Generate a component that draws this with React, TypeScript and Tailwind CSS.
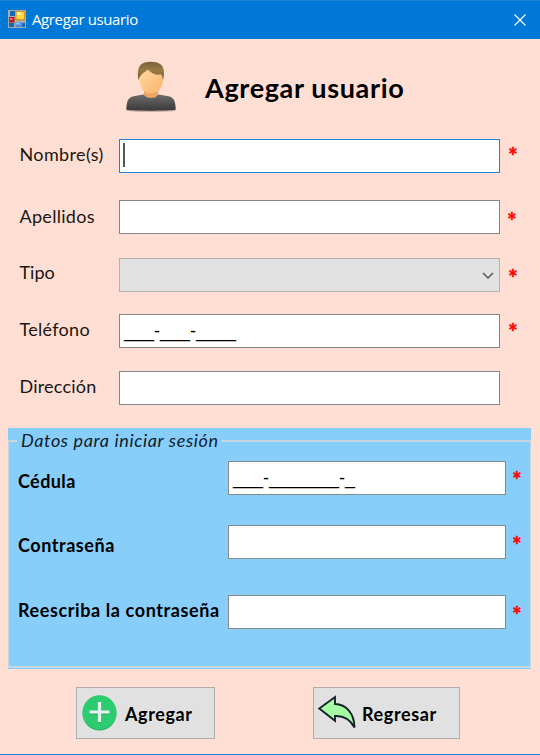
import React from 'react';

const LABEL = 'font-["Lato","Liberation_Sans",sans-serif] whitespace-pre leading-6';

function Star({ className }: { className: string }) {
  return (
    <span className={`block h-6 w-2.5 shrink-0 text-center font-["Lato",sans-serif] text-[22px] font-black leading-6 text-[#ff0000] [-webkit-text-stroke:0.4px_#ff0000] ${className}`}>*</span>
  );
}

function Field({ label, labelClass, boxClass, star, children }: {
  label: string;
  labelClass: string;
  boxClass: string;
  star?: string;
  children?: React.ReactNode;
}) {
  return (
    <div className="flex h-[34px] items-start pl-[19.500px]">
      <div className={`w-[99.500px] shrink-0 text-[18px] text-[#1c1512] ${LABEL} ${labelClass}`}>{label}</div>
      <div className={`flex h-[34px] w-[381px] shrink-0 border ${boxClass}`}>{children}</div>
      {star && <Star className={star} />}
    </div>
  );
}

function LoginField({ label, labelClass, star, children }: {
  label: string;
  labelClass: string;
  star: string;
  children?: React.ReactNode;
}) {
  return (
    <div className="flex h-[34px] items-start pl-2">
      <div className={`w-[210px] shrink-0 text-[18px] font-bold text-black ${LABEL} ${labelClass}`}>{label}</div>
      <div className="flex h-[34px] w-[278px] shrink-0 border border-[#84898e] bg-white">{children}</div>
      <Star className={star} />
    </div>
  );
}

/* Input mask: blanks join into one line per group of digits. */
function Mask({ text, className }: { text: string; className: string }) {
  return (
    <span className={`ml-[4px] whitespace-pre font-["Liberation_Sans",sans-serif] text-[18px] leading-6 text-black ${className}`}>{text}</span>
  );
}

function FormIcon() {
  return (
    <svg width="18" height="18" viewBox="0 0 18 18">
      <rect width="18" height="18" fill="#a5acae" />
      <path d="M2 1h5v5H2zM1 13h5v4H1zM14 13h3v4h-3z" fill="#1767b4" />
      <rect x="7.5" y="1" width="9.5" height="9.5" fill="#cf9626" />
      <rect x="8.5" y="2" width="7.5" height="7" fill="#ffd83c" />
      <rect x="9" y="2" width="4" height="3" fill="#fff09a" />
      <rect x="1" y="7" width="5.5" height="5.5" fill="#b51d21" />
      <rect x="2" y="8" width="2.5" height="2" fill="#ee766a" />
      <rect x="7.5" y="12" width="6" height="5" fill="#4a88dd" />
      <rect x="8" y="12.5" width="4" height="2" fill="#9bc4fc" />
    </svg>
  );
}

function UserIcon() {
  return (
    <svg width="54" height="54" viewBox="0 0 54 54">
      <defs>
        <linearGradient id="shirt" x1="0" y1="0" x2="0" y2="1">
          <stop offset="0" stopColor="#6c6c6c" /><stop offset="1" stopColor="#393939" />
        </linearGradient>
        <linearGradient id="skin" x1="0" y1="0" x2="1" y2="1">
          <stop offset="0" stopColor="#ffdda8" /><stop offset="1" stopColor="#fbb169" />
        </linearGradient>
        <linearGradient id="hair" x1="0" y1="0" x2="0" y2="1">
          <stop offset="0" stopColor="#785f37" /><stop offset=".45" stopColor="#9b7b45" /><stop offset="1" stopColor="#72552b" />
        </linearGradient>
      </defs>
      <ellipse cx="27" cy="49.500" rx="25" ry="1.500" fill="#a08b82" opacity=".55" />
      <path d="M2.300 48.800C2.500 40 4 36.500 9.500 35.200l9.500-1.700h16l9.500 1.700c5.500 1.300 7 4.800 7.200 13.600C44 50 10 50 2.300 48.800Z" fill="url(#shirt)" />
      <path d="M20 27h14v6.500c-1 4.500-13 4.500-14 0Z" fill="#eca563" />
      <path d="M15.500 16C15.500 7 20 4 27 4s12 3 12 12c0 11-5 16.500-12 16.500S15.500 27 15.500 16Z" fill="url(#skin)" />
      <path d="M14.600 19.500C12.600 10 14.500 4 20 1.800c5-1.800 12-1.500 16 1.200 4.500 3 4.800 9 3 16.500-.4-3-.9-5-2-6.200-5.500 1.200-9.500-1-13-4.600-3 2.300-8.300 4.300-9.400 10.800Z" fill="url(#hair)" />
    </svg>
  );
}

function AddIcon() {
  return (
    <svg width="35" height="36" viewBox="0 0 35 36">
      <circle cx="17.500" cy="18.500" r="17" fill="#27b463" />
      <circle cx="17.500" cy="17.300" r="17" fill="#2ecc71" />
      <path d="M17.500 8v20M7.500 18h20" stroke="#27b463" strokeWidth="3.400" />
      <path d="M17.500 7v20M7.500 17h20" stroke="#ecf0f1" strokeWidth="3.200" />
    </svg>
  );
}

function BackIcon() {
  return (
    <svg width="38" height="34" viewBox="0 0 38 34">
      <path d="M1.300 13.500 17 2v7c11 .2 19.500 9.500 19.500 23.500-4-7.500-9.500-12-19.500-11.500v4.700Z" fill="#a4fca3" stroke="#17212b" strokeWidth="1.900" />
    </svg>
  );
}

function ActionButton({ icon, text, className, textClass }: {
  icon: React.ReactNode;
  text: string;
  className: string;
  textClass: string;
}) {
  return (
    <button className={`flex h-[52px] items-start border border-[#adadad] bg-[#e1e1e1] pt-[7px] ${className}`}>
      {icon}
      <span className={`mt-[7px] text-[18px] font-bold tracking-[0.6px] text-black ${LABEL} ${textClass}`}>{text}</span>
    </button>
  );
}

export default function App() {
  return (
    <div className="flex h-[755px] w-[540px] flex-col overflow-hidden border-b border-[#1583d8] bg-[#ffdfd3]">
      <header className="flex h-[39px] shrink-0 items-start border-t border-[#1883d7] bg-[#0078d7] pl-2">
        <div className="mt-[9px]"><FormIcon /></div>
        <span className='ml-[6px] mt-[6px] flex-1 whitespace-nowrap font-["Open_Sans",sans-serif] text-[15px] leading-6 tracking-[-0.38px] text-white'>Agregar usuario</span>
        <svg className="mr-[14px] mt-[13px]" width="12" height="12" viewBox="0 0 12 12"><path d="m.5.5 11 11m0-11-11 11" stroke="#fff" strokeWidth="1.200" /></svg>
      </header>

      <div className="flex h-[100px] shrink-0 items-start pl-[124px] pt-[22px]">
        <UserIcon />
        <h1 className='ml-[27px] mt-[11px] whitespace-nowrap font-["Lato",sans-serif] text-[27px] font-bold leading-8 tracking-[0.65px] text-black'>Agregar usuario</h1>
      </div>

      <form className="flex shrink-0 flex-col">
        <Field label="Nombre(s)" labelClass="mt-[3px] tracking-[0.37px]" boxClass="border-[#1e83d7] bg-white" star="ml-2 mt-[5px]">
          <span className="ml-[3px] mt-[3px] h-6 w-[2px] bg-[#555]" />
        </Field>
        <div className="h-[27px]" />
        <Field label="Apellidos" labelClass="mt-1 tracking-[0.3px]" boxClass="border-[#858585] bg-white" star="ml-[7px] mt-[9px]" />
        <div className="h-6" />
        <Field label="Tipo" labelClass="mt-[2px]" boxClass="justify-end border-[#b2b2b2] bg-[#e1e1e1]" star="ml-2 mt-2">
          <svg className="mr-[5px] mt-[13px]" width="12" height="8" viewBox="0 0 12 8"><path d="m1 1 5 5 5-5" fill="none" stroke="#555" strokeWidth="1.500" /></svg>
        </Field>
        <div className="h-[22px]" />
        <Field label="Teléfono" labelClass="mt-[3px] tracking-[0.3px]" boxClass="border-[#858585] bg-white" star="ml-2 mt-[6px]">
          <Mask text="___-___-____" className="mt-1" />
        </Field>
        <div className="h-[23px]" />
        <Field label="Dirección" labelClass="mt-[3px] tracking-[0.2px]" boxClass="border-[#858585] bg-white" />
      </form>

      <section className="ml-2 mt-[23px] flex h-[241px] w-[523px] shrink-0 flex-col bg-[#87cefa]">
        <div className="flex h-6 shrink-0 items-start">
          <span className="mt-3 h-[2px] w-[9px] bg-[#c5d8e2]" />
          <span className={`w-[205px] pl-1 text-[18px] italic tracking-[0.63px] text-[#10202c] ${LABEL}`}>Datos para iniciar sesión</span>
          <span className="mt-3 h-[2px] flex-1 bg-[#c5d8e2]" />
        </div>
        <div className="-mt-[11px] flex h-[227px] w-[523px] shrink-0 flex-col border-x border-b-2 border-[#c5d8e2] pl-[1px] pt-5">
          <LoginField label="Cédula" labelClass="mt-2 tracking-[0.4px]" star="ml-[6px] mt-[7px]">
            <Mask text="___-_______-_" className="mt-[4px]" />
          </LoginField>
          <div className="h-[30px]" />
          <LoginField label="Contraseña" labelClass="mt-2 tracking-[0.55px]" star="ml-[6px] mt-2" />
          <div className="h-9" />
          <LoginField label="Reescriba la contraseña" labelClass="mt-[3px] tracking-[0.6px]" star="ml-[6px] mt-2" />
        </div>
      </section>

      <footer className="mt-[18px] flex shrink-0 pl-[76px]">
        <ActionButton className="w-[139px] pl-[5px]" icon={<AddIcon />} text="Agregar" textClass="ml-2" />
        <ActionButton className="ml-[98px] w-[147px] pl-1" icon={<BackIcon />} text="Regresar" textClass="ml-[6px]" />
      </footer>
    </div>
  );
}
